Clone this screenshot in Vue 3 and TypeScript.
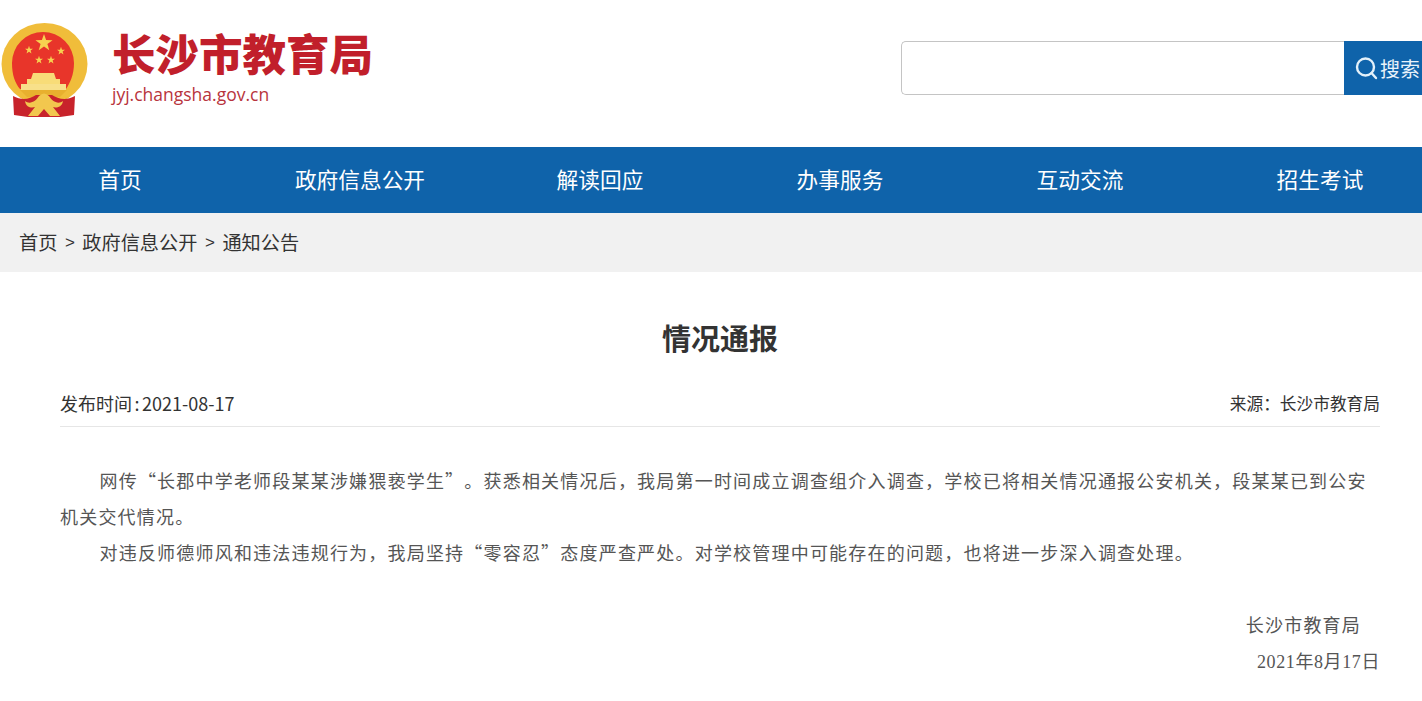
<script setup lang="ts">
const navItems: string[] = ['首页', '政府信息公开', '解读回应', '办事服务', '互动交流', '招生考试']
const stars: { x: number; y: number; r: number }[] = [
  { x: 44, y: 20, r: 9 },
  { x: 29, y: 27, r: 4.2 },
  { x: 39, y: 37, r: 4.2 },
  { x: 51, y: 37, r: 4.2 },
  { x: 61, y: 28, r: 4.2 },
]
function starPoints(cx: number, cy: number, r: number): string {
  const pts: string[] = []
  for (let i = 0; i < 10; i++) {
    const rad = i % 2 === 0 ? r : r * 0.4
    const a = -Math.PI / 2 + (i * Math.PI) / 5
    pts.push(`${(cx + rad * Math.cos(a)).toFixed(2)},${(cy + rad * Math.sin(a)).toFixed(2)}`)
  }
  return pts.join(' ')
}
</script>

<template>
  <div class="page">
    <header class="top">
      <div class="brand">
        <svg class="emblem" width="90" height="96" viewBox="0 0 90 96">
          <ellipse cx="44.500" cy="41" rx="43" ry="41" fill="#f0bd3a" />
          <path d="M12 40 A31 31 0 0 1 74 40 C74 52 70 60 66 66 H20 C15 60 12 52 12 40 Z" fill="#e8352a" />
          <polygon v-for="(s, i) in stars" :key="i" :points="starPoints(s.x, s.y, s.r)" fill="#f7d250" />
          <path d="M33 50 H54 L56 56 H60 V61 H27 V56 H31 Z" fill="#f8dc78" />
          <rect x="21" y="61" width="45" height="6" fill="#f8e08a" />
          <path d="M20 67 H67 L60 74 H27 Z" fill="#e8b02e" />
          <path d="M13 73 C22 78 30 76 36 72 H52 C58 76 66 78 75 73 L74 92 L60 94 H28 L14 92 Z" fill="#c8232b" />
          <path d="M25 78 C30 82 36 78 39 73 Q44 68 49 73 C52 78 58 82 63 78 C62 85 55 85 53 84 L60 93 H50 L44 86 L38 93 H28 L35 84 C32 85 26 85 25 78 Z" fill="#f2c74e" />
        </svg>
        <div class="brand-text">
          <div class="brand-name">长沙市教育局</div>
          <div class="brand-url">jyj.changsha.gov.cn</div>
        </div>
      </div>
      <div class="search">
        <div class="search-box"></div>
        <div class="search-btn">
          <svg width="24" height="24" viewBox="0 0 24 24" fill="none" stroke="#e4f1fa" stroke-width="2.400">
            <circle cx="11.500" cy="11" r="8.500" />
            <path d="M17.500 17 L22 22" stroke-linecap="round" />
          </svg>
          <span>搜索</span>
        </div>
      </div>
    </header>

    <nav class="nav">
      <a v-for="item in navItems" :key="item" class="nav-item">{{ item }}</a>
    </nav>

    <div class="crumbs">
      <span>首页</span><span class="sep">&gt;</span><span>政府信息公开</span><span class="sep">&gt;</span><span>通知公告</span>
    </div>

    <main class="article">
      <h1 class="title">情况通报</h1>
      <div class="meta">
        <span class="published">发布时间 : 2021-08-17</span>
        <span class="source">来源：长沙市教育局</span>
      </div>
      <div class="content">
        <p class="indent">网传“长郡中学老师段某某涉嫌猥亵学生”。获悉相关情况后，我局第一时间成立调查组介入调查，学校已将相关情况通报公安机关，段某某已到公安机关交代情况。</p>
        <p class="indent">对违反师德师风和违法违规行为，我局坚持“零容忍”态度严查严处。对学校管理中可能存在的问题，也将进一步深入调查处理。</p>
        <p class="blank">&nbsp;</p>
        <p class="sign org">长沙市教育局</p>
        <p class="sign date">2021年8月17日</p>
      </div>
    </main>
  </div>
</template>

<style scoped>
.page {
  width: 1422px;
  height: 701px;
  overflow: hidden;
  background: #fff;
  font-family: "Noto Sans CJK SC", "Liberation Sans", sans-serif;
}
.top {
  height: 147px;
  display: flex;
  justify-content: space-between;
  box-sizing: border-box;
}
.brand {
  display: flex;
  align-items: flex-start;
  padding-top: 23px;
}
.emblem {
  display: block;
}
.brand-text {
  margin-left: 22px;
  margin-top: 4px;
}
.brand-name {
  font-size: 43.500px;
  line-height: 52px;
  font-weight: 900;
  color: #c11f2b;
}
.brand-url {
  font-family: "Open Sans", "Liberation Sans", sans-serif;
  font-size: 17.500px;
  line-height: 22px;
  margin-top: 4px;
  color: #b8343c;
}
.search {
  display: flex;
  margin-top: 41px;
  height: 54px;
}
.search-box {
  width: 443px;
  box-sizing: border-box;
  border: 1px solid #c4c4c4;
  border-right: none;
  border-radius: 5px 0 0 5px;
}
.search-btn {
  width: 78px;
  background: #0f63aa;
  color: #e8f2fa;
  font-size: 20px;
  display: flex;
  align-items: center;
  padding-left: 10px;
  box-sizing: border-box;
  gap: 2px;
  white-space: nowrap;
}
.nav {
  height: 66px;
  background: #0f63aa;
  display: grid;
  grid-template-columns: repeat(6, 240px);
}
.nav-item {
  color: #fff;
  font-size: 21.700px;
  line-height: 64px;
  text-align: center;
}
.crumbs {
  height: 59px;
  background: #f1f1f1;
  color: #333;
  font-size: 19.200px;
  line-height: 59px;
  padding-left: 19px;
  display: flex;
}
.sep {
  font-family: "Liberation Sans", sans-serif;
  font-size: 17px;
  margin: 0 7.500px;
}
.article {
  padding: 0 42px 0 60px;
}
.title {
  margin: 45px 0 0;
  font-size: 29px;
  line-height: 40px;
  font-weight: 700;
  color: #333;
  text-align: center;
}
.meta {
  margin-top: 29px;
  height: 40px;
  display: flex;
  justify-content: space-between;
  font-size: 18px;
  line-height: 34px;
  color: #333;
  border-bottom: 1px solid #e6e6e6;
}
.published {
  word-spacing: -1.500px;
}
.source {
  font-size: 16.700px;
}
.content {
  margin-top: 35px;
  font-size: 18px;
  line-height: 36px;
  letter-spacing: 1.200px;
  color: #555;
  text-spacing-trim: space-all;
}
.content p {
  margin: 0;
}
.indent {
  text-indent: 39.500px;
}
.sign {
  text-align: right;
}
.org {
  padding-right: 19px;
}
.date {
  font-family: "Liberation Serif", "Noto Sans CJK SC", serif;
  letter-spacing: 0.600px;
  padding-top: 2px;
}
</style>
